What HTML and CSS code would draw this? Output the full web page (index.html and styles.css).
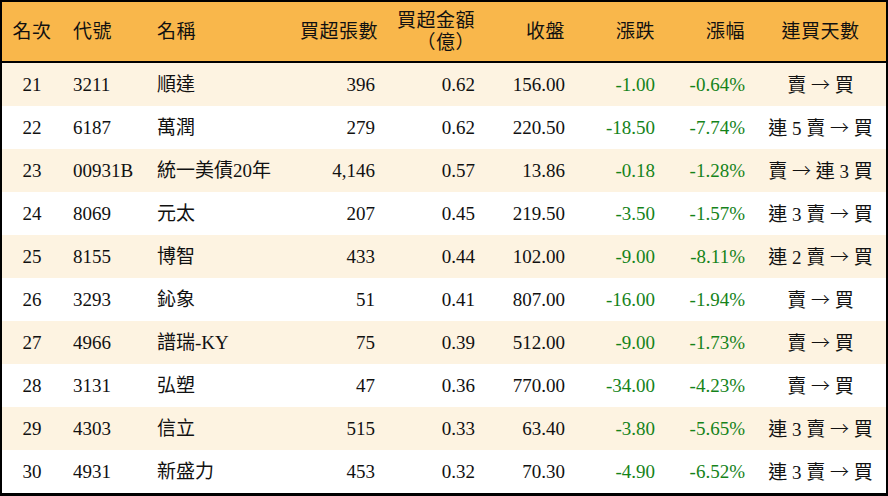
FILE: index.html
```html
<!DOCTYPE html>
<html lang="zh-Hant">
<head>
<meta charset="utf-8">
<title>買超排行</title>
<link rel="stylesheet" href="styles.css">
</head>
<body>
<table class="rank">
  <colgroup>
    <col class="c1"><col class="c2"><col class="c3"><col class="c4"><col class="c5"><col class="c6"><col class="c7"><col class="c8"><col class="c9">
  </colgroup>
  <thead>
    <tr>
      <th class="ctr">名次</th>
      <th class="lft code">代號</th>
      <th class="lft">名稱</th>
      <th class="rgt">買超張數</th>
      <th class="rgt">買超金額<br>（億）</th>
      <th class="rgt">收盤</th>
      <th class="rgt">漲跌</th>
      <th class="rgt">漲幅</th>
      <th class="ctr">連買天數</th>
    </tr>
  </thead>
  <tbody>
    <tr class="odd"><td class="ctr">21</td><td class="lft code">3211</td><td class="lft">順達</td><td class="rgt">396</td><td class="rgt">0.62</td><td class="rgt">156.00</td><td class="rgt dn">-1.00</td><td class="rgt dn">-0.64%</td><td class="ctr">賣 <span class="arw">→</span> 買</td></tr>
    <tr><td class="ctr">22</td><td class="lft code">6187</td><td class="lft">萬潤</td><td class="rgt">279</td><td class="rgt">0.62</td><td class="rgt">220.50</td><td class="rgt dn">-18.50</td><td class="rgt dn">-7.74%</td><td class="ctr">連 5 賣 <span class="arw">→</span> 買</td></tr>
    <tr class="odd"><td class="ctr">23</td><td class="lft code">00931B</td><td class="lft">統一美債20年</td><td class="rgt">4,146</td><td class="rgt">0.57</td><td class="rgt">13.86</td><td class="rgt dn">-0.18</td><td class="rgt dn">-1.28%</td><td class="ctr">賣 <span class="arw">→</span> 連 3 買</td></tr>
    <tr><td class="ctr">24</td><td class="lft code">8069</td><td class="lft">元太</td><td class="rgt">207</td><td class="rgt">0.45</td><td class="rgt">219.50</td><td class="rgt dn">-3.50</td><td class="rgt dn">-1.57%</td><td class="ctr">連 3 賣 <span class="arw">→</span> 買</td></tr>
    <tr class="odd"><td class="ctr">25</td><td class="lft code">8155</td><td class="lft">博智</td><td class="rgt">433</td><td class="rgt">0.44</td><td class="rgt">102.00</td><td class="rgt dn">-9.00</td><td class="rgt dn">-8.11%</td><td class="ctr">連 2 賣 <span class="arw">→</span> 買</td></tr>
    <tr><td class="ctr">26</td><td class="lft code">3293</td><td class="lft">鈊象</td><td class="rgt">51</td><td class="rgt">0.41</td><td class="rgt">807.00</td><td class="rgt dn">-16.00</td><td class="rgt dn">-1.94%</td><td class="ctr">賣 <span class="arw">→</span> 買</td></tr>
    <tr class="odd"><td class="ctr">27</td><td class="lft code">4966</td><td class="lft">譜瑞-KY</td><td class="rgt">75</td><td class="rgt">0.39</td><td class="rgt">512.00</td><td class="rgt dn">-9.00</td><td class="rgt dn">-1.73%</td><td class="ctr">賣 <span class="arw">→</span> 買</td></tr>
    <tr><td class="ctr">28</td><td class="lft code">3131</td><td class="lft">弘塑</td><td class="rgt">47</td><td class="rgt">0.36</td><td class="rgt">770.00</td><td class="rgt dn">-34.00</td><td class="rgt dn">-4.23%</td><td class="ctr">賣 <span class="arw">→</span> 買</td></tr>
    <tr class="odd"><td class="ctr">29</td><td class="lft code">4303</td><td class="lft">信立</td><td class="rgt">515</td><td class="rgt">0.33</td><td class="rgt">63.40</td><td class="rgt dn">-3.80</td><td class="rgt dn">-5.65%</td><td class="ctr">連 3 賣 <span class="arw">→</span> 買</td></tr>
    <tr><td class="ctr">30</td><td class="lft code">4931</td><td class="lft">新盛力</td><td class="rgt">453</td><td class="rgt">0.32</td><td class="rgt">70.30</td><td class="rgt dn">-4.90</td><td class="rgt dn">-6.52%</td><td class="ctr">連 3 賣 <span class="arw">→</span> 買</td></tr>
  </tbody>
</table>
</body>
</html>
```
FILE: styles.css
```css
html, body {
  margin: 0;
  padding: 0;
  background: #ffffff;
}

.rank {
  width: 888px;
  table-layout: fixed;
  border-collapse: separate;
  border-spacing: 0;
  border: 2px solid #000;
  border-bottom-width: 3px;
  font-family: "Liberation Serif", "Noto Sans CJK TC", serif;
  font-size: 19px;
  color: #111;
}

.c1 { width: 60px; }
.c2 { width: 85px; }
.c3 { width: 143px; }
.c4 { width: 95px; }
.c5 { width: 100px; }
.c6 { width: 90px; }
.c7 { width: 90px; }
.c8 { width: 90px; }
.c9 { width: 131px; }

.rank th {
  background: #f9b74b;
  height: 59px;
  padding: 0 10px;
  font-weight: normal;
  line-height: 22px;
  letter-spacing: 0.5px;
  border-bottom: 2px solid #000;
  box-sizing: border-box;
  white-space: nowrap;
}

.rank thead tr { height: 61px; }

.rank td {
  height: 43px;
  padding: 0 10px;
  line-height: 22px;
  white-space: nowrap;
  box-sizing: border-box;
}

.rank tr.odd td { background: #fdf3e1; }

.ctr { text-align: center; }
.lft { text-align: left; }
.rgt { text-align: right; }
.code { padding-left: 11px !important; }

.dn { color: #15831a; }

.arw {
  font-family: "Noto Sans CJK TC", sans-serif;
  font-weight: 300;
}
```
